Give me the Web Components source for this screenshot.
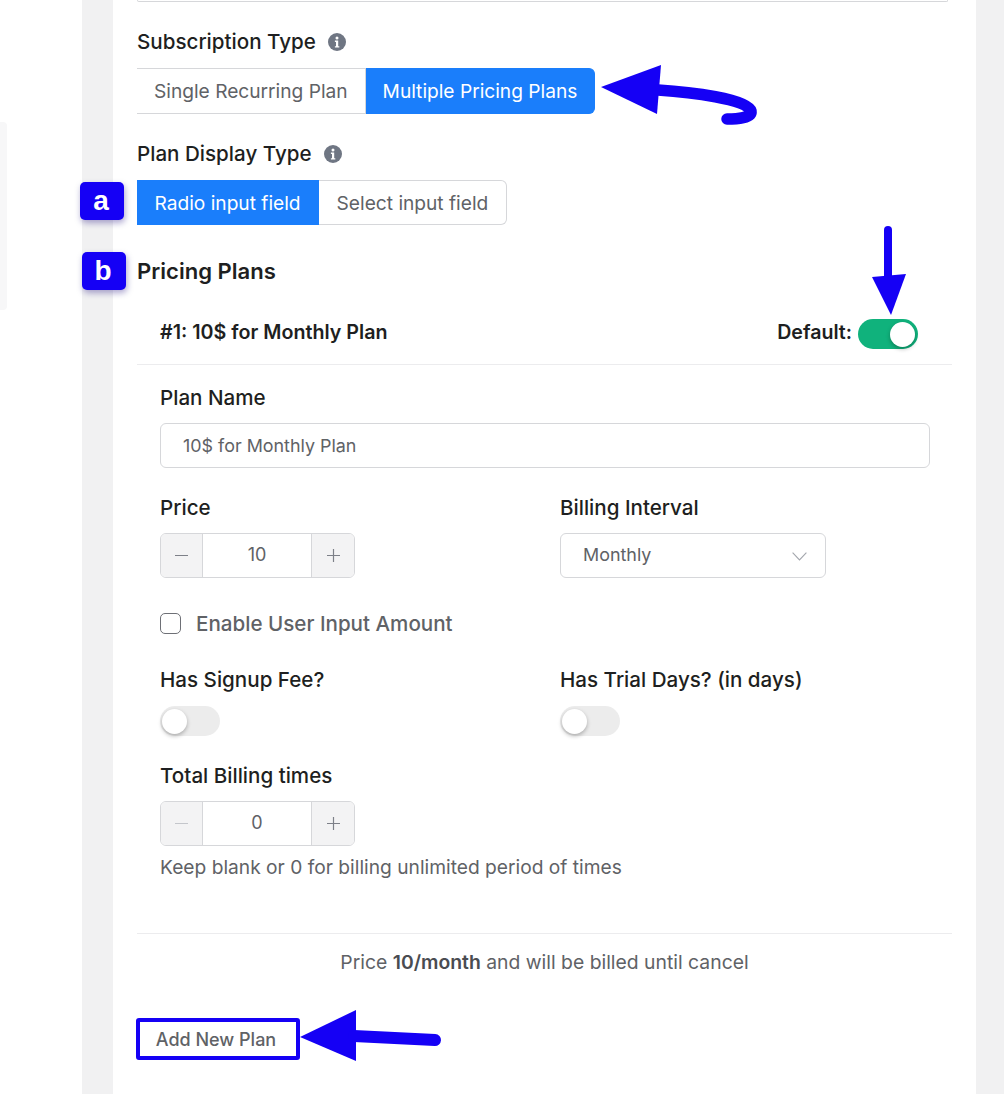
<!DOCTYPE html>
<html>
<head>
<meta charset="utf-8">
<title>Pricing Plans</title>
<style>
  html, body { margin: 0; padding: 0; background: #fff; }
  body { font-family: Inter, "Liberation Sans", sans-serif; font-size: 18px; color: #1e1f21; }
</style>
</head>
<body>
<plan-page></plan-page>

<script>
// small helper, every element below is just template + open shadow root
function mount(el, html) {
    const tpl = document.createElement('template');
    tpl.innerHTML = html;
    el.attachShadow({ mode: 'open' }).appendChild(tpl.content.cloneNode(true));
}

class FieldLabel extends HTMLElement {
    connectedCallback() {
        const info = this.hasAttribute('info');
        mount(this, `
<style>
:host { display: flex; align-items: center; box-sizing: border-box; height: 24px; padding-top: 1px; font-size: 20.6px; font-weight: 500; line-height: 24px; color: #1e1f21; white-space: nowrap; }
:host([strong]) { font-weight: 600; font-size: 22.1px; padding-top: 0; }
svg { margin-left: 12px; width: 18px; height: 18px; margin-top: 1px; }
</style>
<slot></slot>
${info ? `<svg viewBox="0 0 18 18"><circle cx="9" cy="9" r="9" fill="#6f7683"/><circle cx="9" cy="4.9" r="1.5" fill="#fff"/><path d="M6.9 7.6h3.3v5.6h1.1v1.3H6.9v-1.3h1.1V8.9H6.9z" fill="#fff"/></svg>` : ''}
`);
    }
}
customElements.define('field-label', FieldLabel);

class SegButtons extends HTMLElement {
    connectedCallback() {
        // options come in as a | list, active is the index
        const opts = this.getAttribute('options').split('|');
        const active = Number(this.getAttribute('active'));
        const h = this.getAttribute('h') || 46;
        const pad = this.getAttribute('pad') || 17;
        mount(this, `
<style>
:host { display: inline-flex; height: ${h}px; font-size: 19.15px; }
div { display: flex; align-items: center; padding: 0 ${pad}px; box-sizing: border-box; color: #606266; background: #fff; border: 1px solid #d6d7da; white-space: nowrap; }
div:first-child { border-radius: 6px 0 0 6px; }
div:last-child { border-radius: 0 6px 6px 0; }
div:not(:first-child) { border-left: 0; }
div.on { background: #1a7efb; border-color: #1a7efb; color: #fff; }
</style>
${opts.map((o, i) => `<div class="${i === active ? 'on' : ''}">${o}</div>`).join('')}
`);
    }
}
customElements.define('seg-buttons', SegButtons);

class TextBox extends HTMLElement {
    connectedCallback() {
        mount(this, `
<style>
:host { display: flex; align-items: center; box-sizing: border-box; height: 45px; padding: 0 22px; border: 1px solid #d6d7da; border-radius: 6px; color: #606266; font-size: 17.9px; background: #fff; }
:host([select]) { width: 266px; height: 45px; justify-content: space-between; padding: 0 18px 2px 22px; }
svg { width: 15px; height: 9px; margin-top: 4px; }
</style>
<slot></slot>
${this.hasAttribute('select') ? `<svg viewBox="0 0 15 9"><path d="M.6.6l6.9 7.4L14.4.6" fill="none" stroke="#a3a6ad" stroke-width="1.1"/></svg>` : ''}
`);
    }
}
customElements.define('text-box', TextBox);

class NumberBox extends HTMLElement {
    connectedCallback() {
        const dim = this.hasAttribute('dim') ? '#c4c6cb' : '#7d8088';
        mount(this, `
<style>
:host { display: flex; box-sizing: border-box; width: 195px; height: 45px; border: 1px solid #d6d7da; border-radius: 6px; overflow: hidden; color: #606266; font-size: 18px; }
.btn { width: 41px; flex: none; background: #f3f3f4; display: flex; align-items: center; justify-content: center; }
.btn:last-child { width: 42px; }
.val { flex: 1; display: flex; align-items: center; justify-content: center; padding-bottom: 2px; border-left: 1px solid #d6d7da; border-right: 1px solid #d6d7da; background: #fff; }
svg { width: 13px; height: 13px; }
</style>
<div class="btn"><svg viewBox="0 0 13 13"><path d="M0 6.5h13" stroke="${dim}" stroke-width="1.2"/></svg></div>
<div class="val"><slot></slot></div>
<div class="btn"><svg viewBox="0 0 13 13"><path d="M0 6.5h13M6.5 0v13" stroke="#7d8088" stroke-width="1.2"/></svg></div>
`);
    }
}
customElements.define('number-box', NumberBox);

class ToggleSwitch extends HTMLElement {
    connectedCallback() {
        mount(this, `
<style>
:host { display: flex; align-items: center; box-sizing: border-box; width: 60px; height: 30px; padding: 0 2px; border-radius: 15px; background: #ececec; flex: none; }
:host([on]) { background: #10b27c; justify-content: flex-end; padding: 0 3px; }
i { display: block; width: 25px; height: 25px; border-radius: 50%; background: #fff; box-shadow: 0 2px 4px rgba(0,0,0,.28); }
</style>
<i></i>
`);
    }
}
customElements.define('toggle-switch', ToggleSwitch);

class CheckRow extends HTMLElement {
    connectedCallback() {
        mount(this, `
<style>
:host { display: flex; align-items: center; height: 21px; font-size: 20.6px; font-weight: 500; color: #606266; white-space: nowrap; }
i { display: block; box-sizing: border-box; width: 21px; height: 21px; margin-right: 15px; border: 1.3px solid #6e7076; border-radius: 5px; background: #fff; }
</style>
<i></i><slot></slot>
`);
    }
}
customElements.define('check-row', CheckRow);

class NoteBadge extends HTMLElement {
    connectedCallback() {
        mount(this, `
<style>
:host { position: absolute; display: flex; align-items: center; justify-content: center; box-sizing: border-box; width: 44px; height: 38px; padding-right: 2px; border-radius: 5px; background: #1500f5; color: #fff; font-family: "Liberation Sans", Arial, sans-serif; font-size: 28px; font-weight: 700; box-shadow: 1px 3px 6px rgba(20,0,120,.35); }
</style>
<slot></slot>
`);
    }
}
customElements.define('note-badge', NoteBadge);

class PlanPage extends HTMLElement {
    connectedCallback() {
        mount(this, `
<style>
:host { display: flex; position: relative; height: 1094px; overflow: hidden; background: #fff; }
.rail { width: 82px; flex: none; }
.stub { width: 7px; height: 188px; margin-top: 122px; background: #f7f7f8; border-radius: 0 4px 4px 0; }
.gutter { width: 31px; flex: none; background: #f1f1f2; }
.gutter.r { width: 28px; }
.card { width: 863px; flex: none; box-sizing: border-box; padding-left: 24px; }
.inner { width: 815px; }
.topfield { box-sizing: border-box; width: 811px; height: 2px; border: 1px solid #d6d7da; border-top: 0; border-radius: 0 0 6px 6px; }
.plan-head { display: flex; align-items: center; justify-content: space-between; margin-top: 36px; padding: 0 34px 15px 23px; border-bottom: 1px solid #ececee; }
.plan-title { font-size: 19.7px; font-weight: 600; padding-bottom: 4px; }
.default { display: flex; align-items: center; gap: 6px; font-size: 19.6px; font-weight: 600; }
.default span { padding-bottom: 4px; }
.plan-body { width: 770px; margin-left: 23px; }
.cols { display: grid; grid-template-columns: 400px 1fr; }
.help { margin-top: 9px; height: 24px; line-height: 24px; font-size: 19.2px; color: #606266; white-space: nowrap; }
.rule { height: 1px; background: #ececee; margin-top: 54px; }
.summary { margin-top: 16px; height: 24px; line-height: 24px; font-size: 19.35px; color: #606266; text-align: center; }
.summary b { font-weight: 600; color: #4a4c51; }
.add { box-sizing: border-box; display: flex; align-items: center; justify-content: center; width: 164px; height: 42px; margin: 44px 0 0 -1px; padding-right: 4px; border: 4px solid #1500f5; border-radius: 3px; color: #606266; font-size: 18px; font-weight: 500; background: #fff; }
.mt27 { margin-top: 27px; } .mt14 { margin-top: 14px; } .mt15 { margin-top: 15px; }
.mt34 { margin-top: 34px; } .mt20 { margin-top: 20px; } .mt35 { margin-top: 35px; } .mt33 { margin-top: 33px; }
svg.marks { position: absolute; left: 0; top: 0; width: 1004px; height: 1094px; pointer-events: none; }
</style>

<div class="rail"><div class="stub"></div></div>
<div class="gutter"></div>
<div class="card"><div class="inner">
    <div class="topfield"></div>

    <field-label info class="mt27">Subscription Type</field-label>
    <div class="mt15"><seg-buttons options="Single Recurring Plan|Multiple Pricing Plans" active="1"></seg-buttons></div>

    <field-label info class="mt27">Plan Display Type</field-label>
    <div class="mt15"><seg-buttons options="Radio input field|Select input field" active="0" h="45" pad="17.5"></seg-buttons></div>

    <field-label strong class="mt34">Pricing Plans</field-label>

    <div class="plan-head">
        <div class="plan-title">#1: 10$ for Monthly Plan</div>
        <div class="default"><span>Default:</span> <toggle-switch on></toggle-switch></div>
    </div>

    <div class="plan-body">
        <field-label class="mt20">Plan Name</field-label>
        <text-box class="mt14">10$ for Monthly Plan</text-box>

        <div class="cols mt27">
            <div>
                <field-label>Price</field-label>
                <number-box class="mt14">10</number-box>
            </div>
            <div>
                <field-label>Billing Interval</field-label>
                <text-box select class="mt14">Monthly</text-box>
            </div>
        </div>

        <check-row class="mt35">Enable User Input Amount</check-row>

        <div class="cols mt33">
            <div>
                <field-label>Has Signup Fee?</field-label>
                <toggle-switch class="mt15"></toggle-switch>
            </div>
            <div>
                <field-label>Has Trial Days? (in days)</field-label>
                <toggle-switch class="mt15"></toggle-switch>
            </div>
        </div>

        <field-label class="mt27">Total Billing times</field-label>
        <number-box dim class="mt14">0</number-box>
        <div class="help">Keep blank or 0 for billing unlimited period of times</div>
    </div>

    <div class="rule"></div>
    <div class="summary">Price <b>10/month</b> and will be billed until cancel</div>
    <div class="add">Add New Plan</div>
</div></div>
<div class="gutter r"></div>

<!-- annotations drawn over the screenshot -->
<note-badge style="left:80px;top:182px">a</note-badge>
<note-badge style="left:82px;top:252px">b</note-badge>
<svg class="marks" viewBox="0 0 1004 1094">
    <g fill="#1500f5">
        <path d="M601 87L661 65L657 114Z"/>
        <path d="M888 230V276" stroke="#1500f5" stroke-width="8" stroke-linecap="round"/>
        <path d="M872 277L906 274L891 315Z"/>
        <path d="M300 1037L356 1010V1061Z"/>
        <path d="M354 1036L435 1040" stroke="#1500f5" stroke-width="12" stroke-linecap="round"/>
    </g>
    <path d="M658 90C690 92 748 99 751 111C752 118 737 119 727 119" fill="none" stroke="#1500f5" stroke-width="11.5" stroke-linecap="round"/>
</svg>
`);
    }
}
customElements.define('plan-page', PlanPage);
</script>
</body>
</html>
